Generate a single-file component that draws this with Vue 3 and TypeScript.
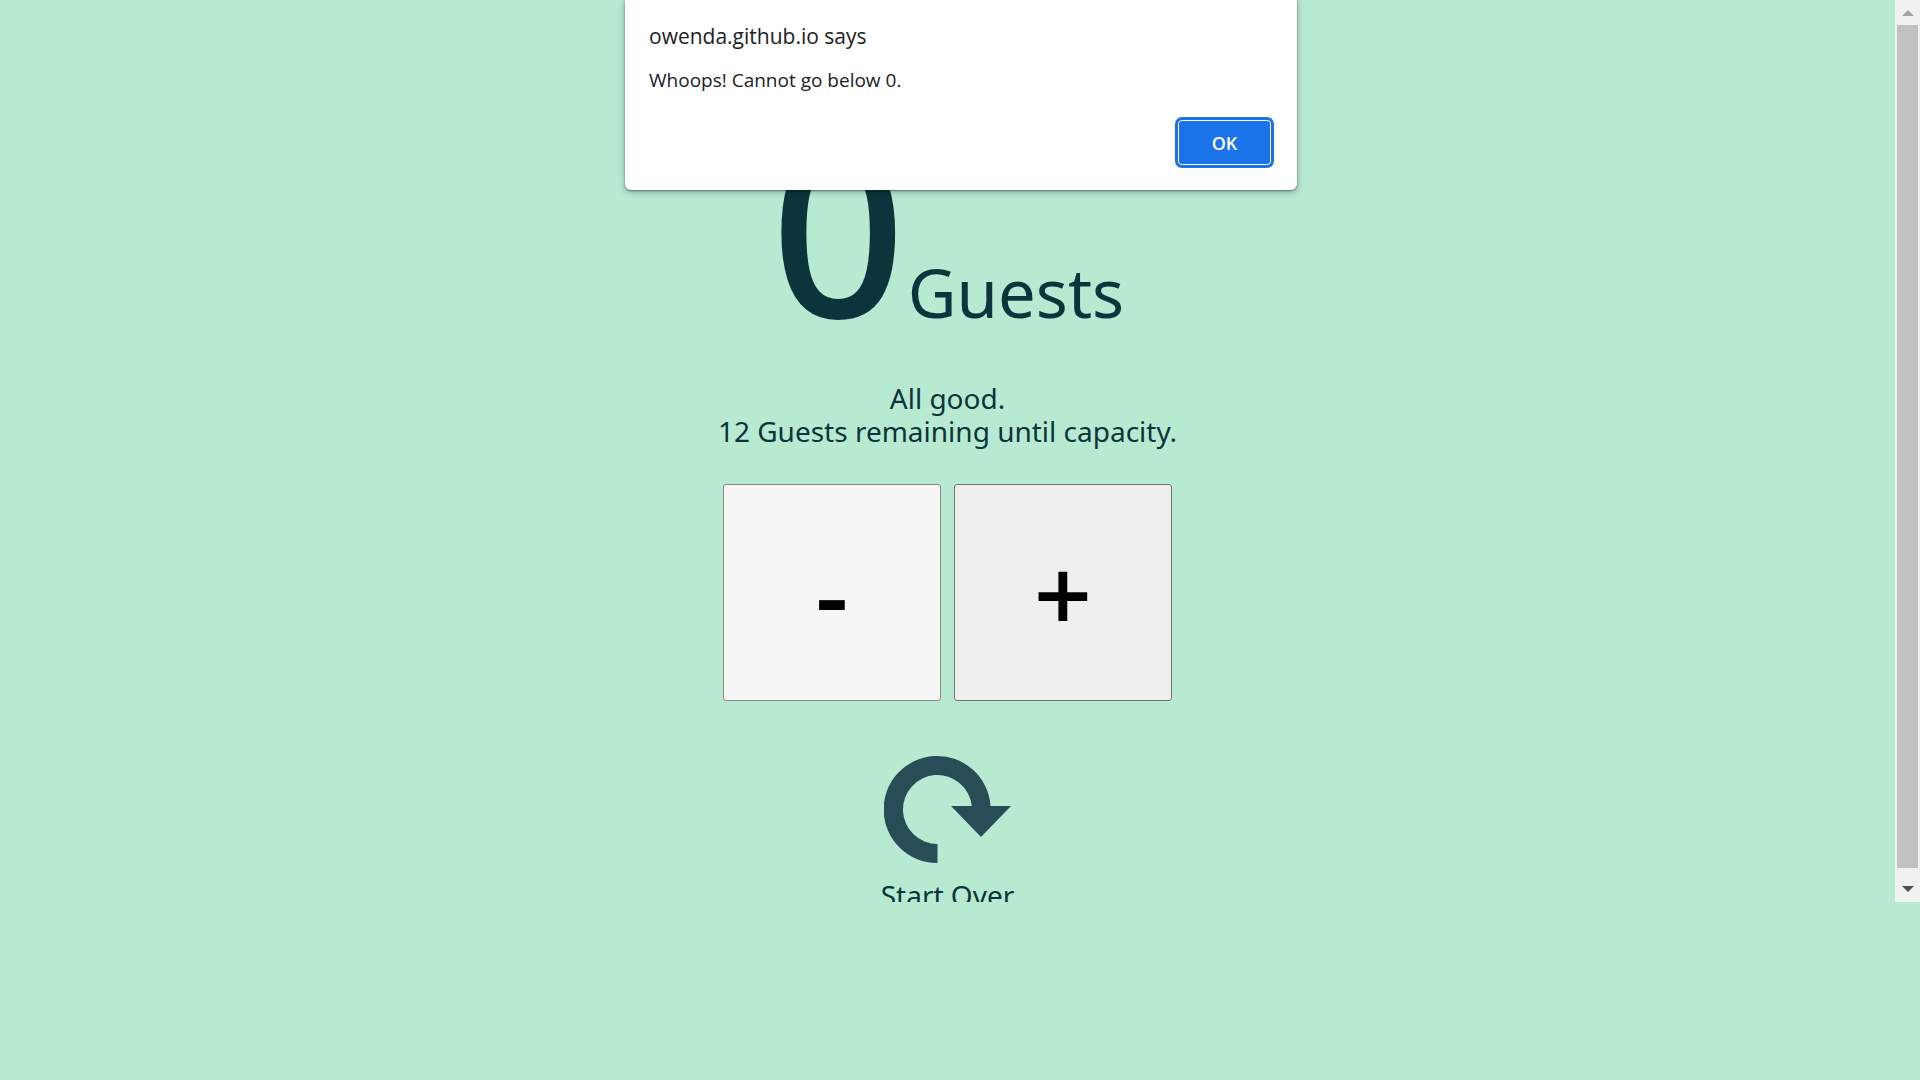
<script setup lang="ts">
import { computed, ref } from 'vue'

const capacity = 12
const guests = ref(0)
const alertText = ref('Whoops! Cannot go below 0.')
const remaining = computed(() => capacity - guests.value)

function add(step: number) {
  const next = guests.value + step
  if (next < 0) {
    alertText.value = 'Whoops! Cannot go below 0.'
    return
  }
  guests.value = Math.min(next, capacity)
}

function reset() {
  guests.value = 0
}
</script>

<template>
  <div class="screen">
    <div class="viewport">
      <main class="counter">
        <h1 class="total">
          <span class="number">{{ guests }}</span>
          <span class="unit">Guests</span>
        </h1>
        <p class="status">All good.<br />{{ remaining }} Guests remaining until capacity.</p>
        <div class="controls">
          <button class="step hovered" type="button" @click="add(-1)">-</button>
          <button class="step" type="button" @click="add(1)">+</button>
        </div>
        <button class="restart" type="button" @click="reset">
          <svg class="restart-icon" viewBox="0 0 127 108" aria-hidden="true">
            <path d="M53.5 107A53.5 53.5 0 1 1 106.5 50H127L97 81L67 50H87.8A34.5 34.5 0 1 0 53.5 88Z" />
          </svg>
          <span>Start Over</span>
        </button>
      </main>
      <div class="scrollbar" aria-hidden="true">
        <svg class="arrow up" viewBox="0 0 12 6"><path d="M6 0L12 6H0Z" /></svg>
        <div class="thumb"></div>
        <svg class="arrow down" viewBox="0 0 12 6"><path d="M0 0H12L6 6Z" /></svg>
      </div>
    </div>

    <section v-if="alertText" class="dialog" role="alertdialog" aria-labelledby="alert-title" aria-describedby="alert-text">
      <h2 id="alert-title" class="dialog-title">owenda.github.io says</h2>
      <p id="alert-text" class="dialog-text">{{ alertText }}</p>
      <button class="ok" type="button" @click="alertText = ''">OK</button>
    </section>
  </div>
</template>

<style>
body {
  margin: 0;
  background: #b8ead1;
}
</style>

<style scoped>
.screen {
  display: flex;
  flex-direction: column;
  box-sizing: border-box;
  height: 100vh;
  padding-bottom: 178px;
  background: #b8ead1;
  color: #0c343d;
  font-family: "Trebuchet MS", "Noto Sans", sans-serif;
}

.viewport {
  display: flex;
  flex: 1;
  min-height: 0;
  overflow: hidden;
}

.counter {
  display: flex;
  flex: 1;
  flex-direction: column;
  align-items: center;
}

.total {
  display: flex;
  align-items: baseline;
  gap: 2px;
  margin: 92px 0 0;
  font-weight: 400;
}

.number {
  font-size: 236px;
  font-weight: 500;
  line-height: 270px;
}

.unit {
  font-size: 67px;
  line-height: 80px;
}

.status {
  margin: 20px 0 0;
  font-size: 28px;
  line-height: 33px;
  text-align: center;
}

.controls {
  display: flex;
  gap: 13px;
  margin-top: 36px;
}

.step {
  box-sizing: border-box;
  width: 218px;
  height: 217px;
  padding: 0;
  border: 1px solid #767676;
  border-radius: 3px;
  background: #efefef;
  color: #000;
  font-family: "Open Sans", sans-serif;
  font-size: 102px;
  font-weight: 600;
  line-height: 136px;
}

.step.hovered {
  border-color: #8c8c8c;
  background: #f5f5f5;
}

.restart {
  display: flex;
  flex-direction: column;
  align-items: center;
  flex-shrink: 0;
  margin-top: 55px;
  padding: 0;
  border: 0;
  background: none;
  color: inherit;
  font: inherit;
  font-size: 28px;
  line-height: 33px;
}

.restart-icon {
  width: 127px;
  height: 108px;
  margin-bottom: 15px;
  fill: #294d57;
}

.scrollbar {
  display: flex;
  flex-direction: column;
  align-items: center;
  box-sizing: border-box;
  width: 25px;
  padding: 10px 0;
  background: #f1f1f1;
}

.arrow {
  width: 12px;
  height: 6px;
  flex-shrink: 0;
}

.up {
  margin-bottom: 9px;
  fill: #a3a3a3;
}

.down {
  margin-top: 18px;
  fill: #505050;
}

.thumb {
  flex: 1;
  width: 21px;
  background: #c1c1c1;
}

.dialog {
  position: absolute;
  top: 0;
  left: 50%;
  display: flex;
  flex-direction: column;
  box-sizing: border-box;
  width: 672px;
  margin-left: -335px;
  padding: 21px 23px 22px 24px;
  border-radius: 0 0 6px 6px;
  background: #fff;
  box-shadow: 0 1px 2px rgba(0, 0, 0, 0.4), 0 2px 6px 1px rgba(0, 0, 0, 0.2);
  color: #202124;
  font-family: "Segoe UI", "Open Sans", sans-serif;
}

.dialog-title {
  margin: 0;
  font-size: 21px;
  font-weight: 400;
  line-height: 31px;
}

.dialog-text {
  margin: 15px 0 23px;
  font-size: 19px;
  line-height: 27px;
}

.ok {
  align-self: flex-end;
  width: 99px;
  height: 51px;
  padding: 0;
  border: 3px solid #1a73e8;
  border-radius: 7px;
  background: #1a73e8;
  box-shadow: inset 0 0 0 1px #fff;
  color: #fff;
  font-family: inherit;
  font-size: 18px;
  font-weight: 600;
}
</style>
